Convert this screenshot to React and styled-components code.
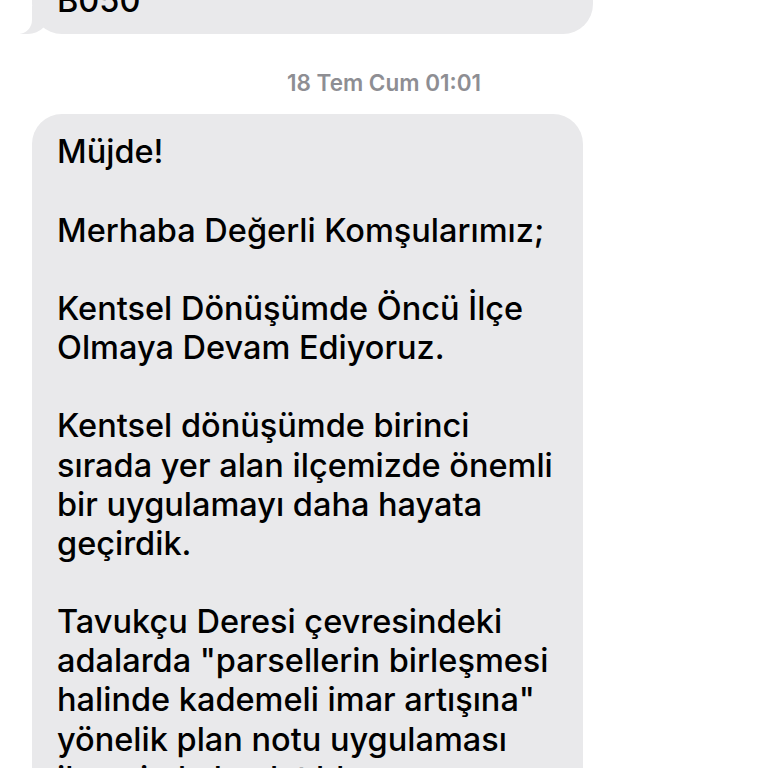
import React from "react";
import styled, { createGlobalStyle } from "styled-components";

const Global = createGlobalStyle`
  html, body { margin: 0; padding: 0; background: #ffffff; }
  body { overflow: hidden; font-family: Inter, "Noto Sans", "Liberation Sans", sans-serif; }
`;

const Thread = styled.div`
  width: 768px;
  height: 768px;
  overflow: hidden;
  display: flex;
  flex-direction: column;
  align-items: flex-start;
`;

const Bubble = styled.div`
  position: relative;
  box-sizing: border-box;
  width: ${(p) => p.$w}px;
  margin-left: 32px;
  margin-top: ${(p) => p.$mt || 0}px;
  padding: ${(p) => p.$pt ?? 18}px 25px ${(p) => p.$pb ?? 16}px 25px;
  background: #e9e9eb;
  border-radius: 30px;
  color: #000;
  font-size: 32.5px;
  font-weight: 500;
  line-height: 39.15px;

  ${(p) =>
    p.$tail &&
    `
    &::before {
      content: "";
      position: absolute;
      bottom: 0;
      left: -12px;
      width: 30px;
      height: 28px;
      background: #e9e9eb;
      border-bottom-right-radius: 22px;
      z-index: 0;
    }
    &::after {
      content: "";
      position: absolute;
      bottom: 0;
      left: -18px;
      width: 18px;
      height: 28px;
      background: #ffffff;
      border-bottom-right-radius: 14px;
      z-index: 1;
    }
  `}
`;

const Para = styled.p`
  position: relative;
  z-index: 2;
  margin: 0;
  & + & { margin-top: 39.15px; }
`;

const Stamp = styled.div`
  align-self: center;
  margin: 36px 0 0;
  font-size: 22.5px;
  font-weight: 600;
  line-height: 26px;
  color: #8e8e93;
`;

const lines = (arr) =>
  arr.map((l, i) => (
    <React.Fragment key={i}>
      {l}
      {i < arr.length - 1 && <br />}
    </React.Fragment>
  ));

export default function App() {
  return (
    <>
      <Global />
      <Thread>
        <Bubble $w={561} $mt={-72} $pt={14} $pb={14} $tail>
          <Para>{lines(["Tel: 0216 444", "B050"])}</Para>
        </Bubble>
        <Stamp>18 Tem Cum 01:01</Stamp>
        <Bubble $w={551} $mt={18}>
          <Para>Müjde!</Para>
          <Para>Merhaba Değerli Komşularımız;</Para>
          <Para>{lines(["Kentsel Dönüşümde Öncü İlçe", "Olmaya Devam Ediyoruz."])}</Para>
          <Para>
            {lines([
              "Kentsel dönüşümde birinci",
              "sırada yer alan ilçemizde önemli",
              "bir uygulamayı daha hayata",
              "geçirdik.",
            ])}
          </Para>
          <Para>
            {lines([
              "Tavukçu Deresi çevresindeki",
              "adalarda \"parsellerin birleşmesi",
              "halinde kademeli imar artışına\"",
              "yönelik plan notu uygulaması",
              "ilçemizde başlatıldı.",
            ])}
          </Para>
        </Bubble>
      </Thread>
    </>
  );
}
